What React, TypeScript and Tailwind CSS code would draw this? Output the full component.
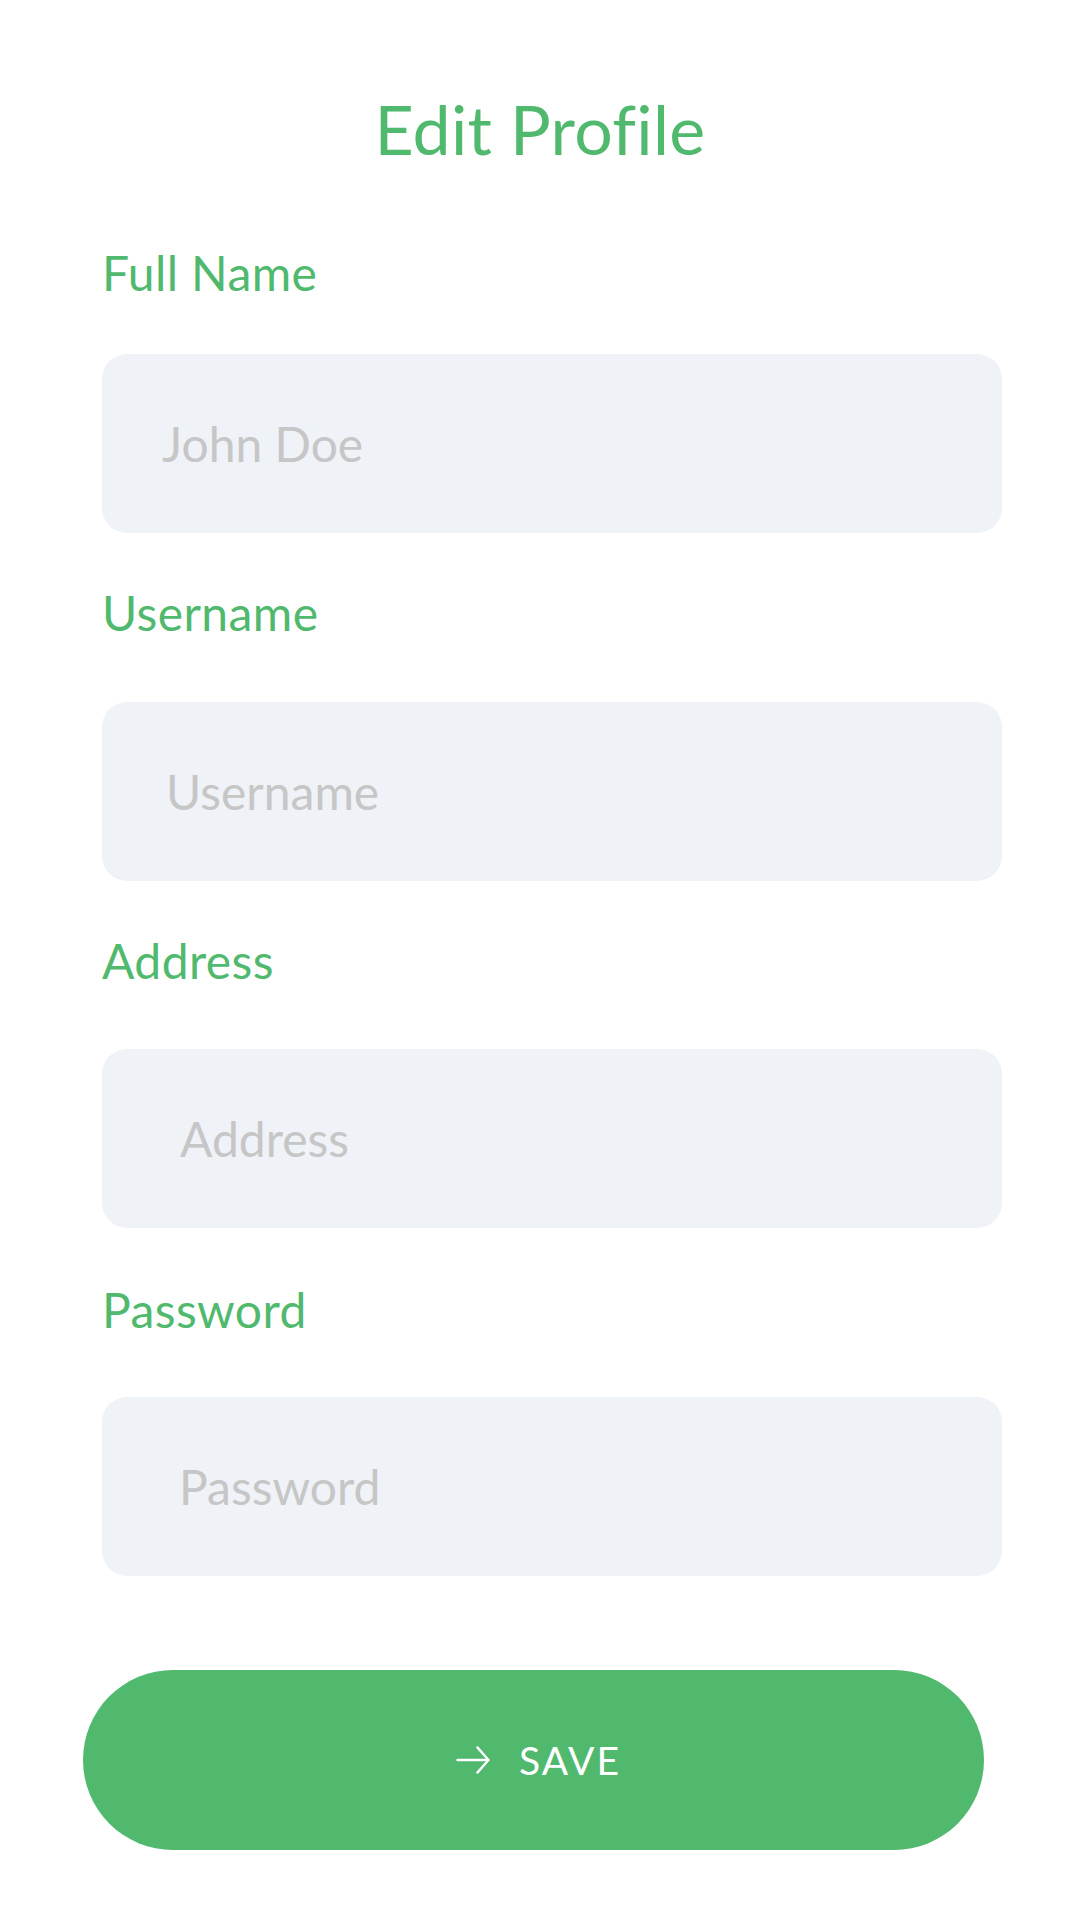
import { useState } from "react";

const FIELDS = [
  { label: "Full Name", placeholder: "John Doe", type: "text", labelGap: "mb-[57px]", pad: "pl-[60px]", top: "mt-[86px]" },
  { label: "Username", placeholder: "Username", type: "text", labelGap: "mb-[65px]", pad: "pl-[64px]", top: "mt-[56px]" },
  { label: "Address", placeholder: "Address", type: "text", labelGap: "mb-[64px]", pad: "pl-[78px]", top: "mt-[56px]" },
  { label: "Password", placeholder: "Password", type: "password", labelGap: "mb-[63px]", pad: "pl-[77px]", top: "mt-[58px]" },
];

export default function App() {
  const [values, setValues] = useState<Record<string, string>>({});

  return (
    <main className="w-[1080px] h-[1920px] bg-white font-['Lato','Liberation_Sans',sans-serif]">
      <h1 className="pt-[95px] text-center text-[68px] leading-none font-normal tracking-[0.3px] text-[#50b96e]">
        Edit Profile
      </h1>

      <form className="px-[102px]" onSubmit={(e) => e.preventDefault()}>
        {FIELDS.map((f) => (
          <div key={f.label} className={f.top}>
            <label className={`block text-[48px] leading-none tracking-[0.4px] text-[#50b96e] ${f.labelGap}`}>
              {f.label}
            </label>
            <input
              type={f.type}
              placeholder={f.placeholder}
              value={values[f.label] ?? ""}
              onChange={(e) => setValues({ ...values, [f.label]: e.target.value })}
              className={`block w-[900px] h-[179px] rounded-[25px] bg-[#eff2f7] ${f.pad} pr-8 text-[48px] text-gray-600 placeholder:text-[#c6c6c6] outline-none`}
            />
          </div>
        ))}
      </form>

      {/* Save button */}
      <div className="pl-[83px] mt-[94px]">
        <button className="w-[901px] h-[180px] pl-[10px] rounded-full bg-[#50b96e] flex items-center justify-center gap-[29px] text-white">
          <svg width="34" height="28" viewBox="0 0 34 28" fill="none" stroke="currentColor" strokeWidth="2.5" strokeLinecap="round" strokeLinejoin="round">
            <path d="M1.5 14H32.5M21.5 1.5L32.5 14L21.5 26.5" />
          </svg>
          <span className="text-[39px] leading-none tracking-[2px]">SAVE</span>
        </button>
      </div>
    </main>
  );
}
